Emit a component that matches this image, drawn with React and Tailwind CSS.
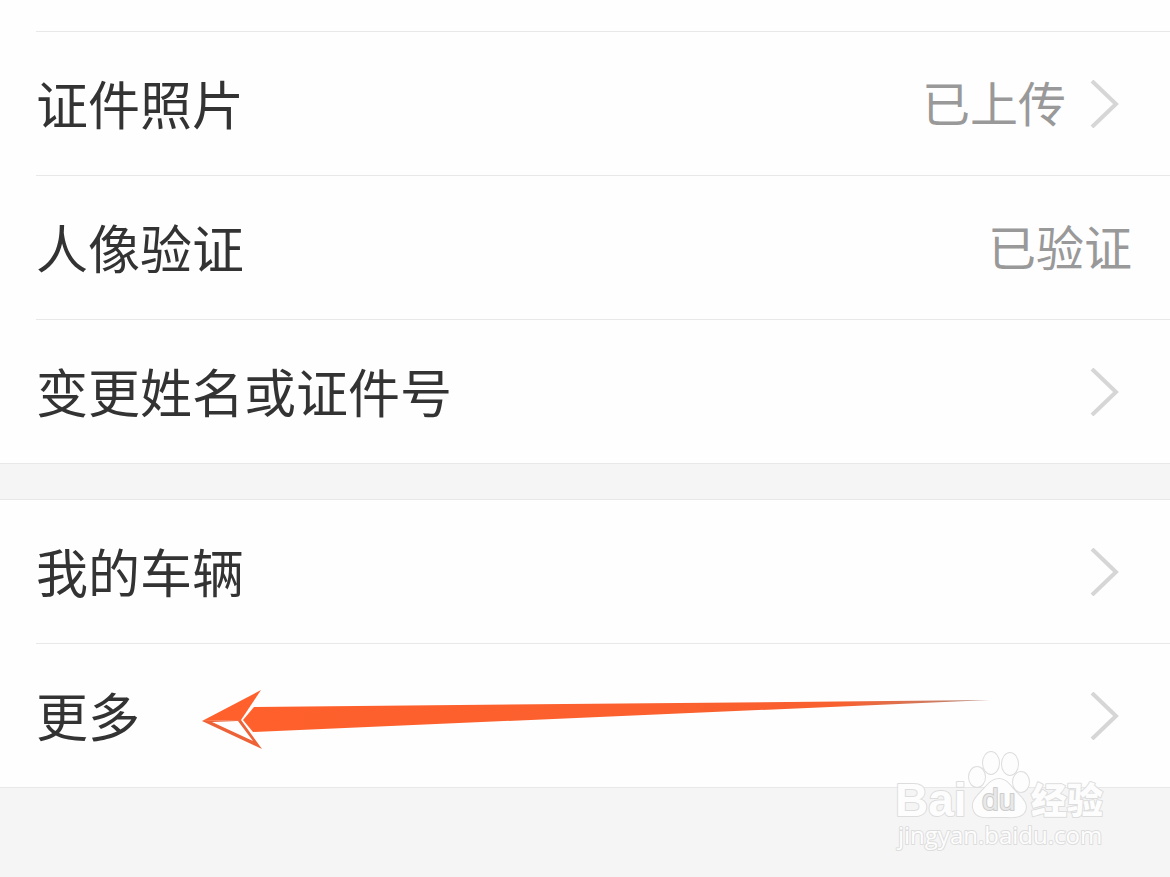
import React from 'react';

const SECTIONS = [
  [
    { label: '证件照片', value: '已上传', link: true },
    { label: '人像验证', value: '已验证' },
    { label: '变更姓名或证件号', link: true },
  ],
  [
    { label: '我的车辆', link: true },
    { label: '更多', link: true, marked: true },
  ],
];

const Chevron = () => (
  <svg className="w-8 h-12 shrink-0" viewBox="0 0 32 48" fill="none" stroke="#d6d6d6" strokeWidth="4" aria-hidden="true">
    <path d="M4 1 L28 24 L4 47" />
  </svg>
);

const Arrow = () => (
  <svg className="absolute left-[164px] top-[42px] w-[792px] h-[66px] pointer-events-none" viewBox="0 0 792 66" aria-hidden="true">
    <defs>
      <linearGradient id="tail" x1="0" x2="1" y1="0" y2="0">
        <stop offset="0" stopColor="#ff602c" />
        <stop offset="0.8" stopColor="#f9602f" />
        <stop offset="1" stopColor="#b58a7c" />
      </linearGradient>
    </defs>
    <path d="M54 21 L790 14 L53 46 L43 34 Z" fill="url(#tail)" />
    <path d="M2 35 L61 4 L41 34 Z" fill="#ff602c" />
    <path d="M2 35 L41 34 L62 63 Z M12 36 L53 55 L38 35 Z" fill="#ee6237" fillRule="evenodd" />
  </svg>
);

const Row = ({ label, value, link, marked }) => {
  const Tag = link ? 'button' : 'div';
  return (
    <li className="relative border-t border-[#e8e8e8] first:border-t-0">
      <Tag className="flex w-full h-[143px] items-center justify-between pr-[38px] text-left">
        <span className="pb-0.5 text-[52px] leading-[60px] text-[#333333]">{label}</span>
        <span className="flex items-center gap-[22px]">
          {value && <span className="pb-1.5 text-[48px] leading-[60px] text-[#999999]">{value}</span>}
          {link && <span className="flex pr-3"><Chevron /></span>}
        </span>
      </Tag>
      {marked && <Arrow />}
    </li>
  );
};

const Watermark = () => (
  <svg className="absolute right-[58px] top-[746px] w-[220px] h-[110px] pointer-events-none" viewBox="0 0 220 110">
    <g fill="#fdfdfd" stroke="#dddddd" strokeWidth="2" paintOrder="stroke" strokeLinejoin="round">
      <ellipse cx="85" cy="31" rx="8" ry="10" />
      <ellipse cx="99" cy="17" rx="8" ry="11" />
      <ellipse cx="118" cy="18" rx="8" ry="11" />
      <ellipse cx="129" cy="36" rx="8" ry="10" />
      <path d="M107 33 C99 33 95 40 89 46 C82 53 79 58 82 65 C86 73 95 71 107 71 C119 71 129 73 133 65 C136 58 131 53 124 46 C118 40 115 33 107 33 Z" />
      <text x="3" y="70" className="font-['Liberation_Sans',sans-serif] text-[46px] font-bold">Bai</text>
      <text x="90" y="64" className="font-['Liberation_Sans',sans-serif] text-[30px]" fill="#e8e8e8" stroke="#cccccc">du</text>
      <text x="139" y="68" className="font-['Noto_Sans_CJK_SC',sans-serif] text-[36px] font-black">经验</text>
      <text x="6" y="98" className="font-['Open_Sans',sans-serif] text-[24px] font-medium">jingyan.baidu.com</text>
    </g>
  </svg>
);

const App = () => (
  <main className="relative min-h-screen overflow-hidden bg-[#f5f5f5] font-['Noto_Sans_CJK_SC',sans-serif]">
    <div className="h-[31px] bg-[#fefefe]" />
    {SECTIONS.map((rows, i) => (
      <section key={i} className={i > 0 ? 'mt-[35px] border-y border-[#e8e8e8] bg-[#fefefe]' : 'border-b border-[#e8e8e8] bg-[#fefefe]'}>
        {i === 0 && <div className="ml-9 border-t border-[#e8e8e8]" />}
        <ul className="pl-9">
          {rows.map((row) => (
            <Row key={row.label} {...row} />
          ))}
        </ul>
      </section>
    ))}
    <Watermark />
  </main>
);

export default App;
